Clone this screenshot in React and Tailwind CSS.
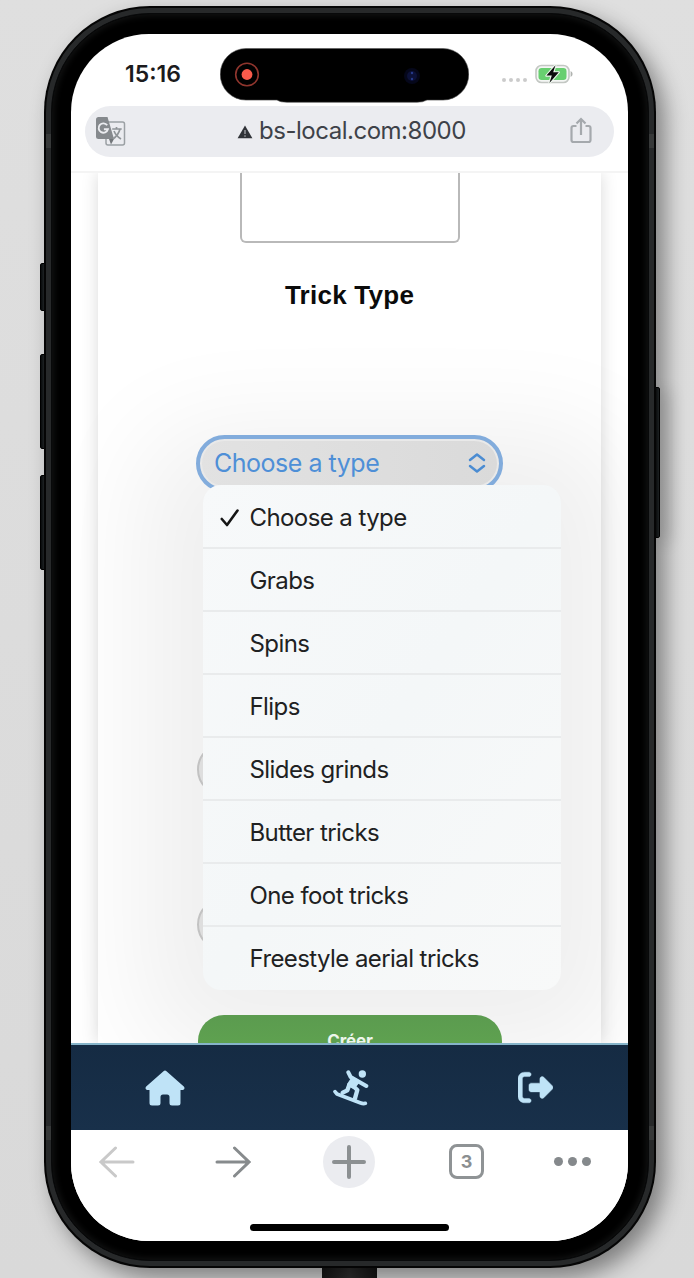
import { FaRightFromBracket } from "react-icons/fa6";

const OPTIONS = [
  "Choose a type",
  "Grabs",
  "Spins",
  "Flips",
  "Slides grinds",
  "Butter tricks",
  "One foot tricks",
  "Freestyle aerial tricks",
];

function StatusBar() {
  return (
    <div className="relative h-[72px] shrink-0">
      <div className="flex h-full items-center pt-[8px]">
        <div className="ml-[54px] w-[60px] text-[23px] leading-[28px] font-semibold whitespace-nowrap text-[#1b1b1d]">15:16</div>
        <div className="mr-[55px] ml-auto flex items-center">
          <div className="mt-[11px] mr-[8px] flex gap-[3px]">
            <i className="size-1 rounded-full bg-[#cbcbcb]" />
            <i className="size-1 rounded-full bg-[#cbcbcb]" />
            <i className="size-1 rounded-full bg-[#cbcbcb]" />
            <i className="size-1 rounded-full bg-[#cbcbcb]" />
          </div>
          <svg width="38" height="20" viewBox="0 0 38 20">
            <rect x="1" y="1.5" width="33" height="17" rx="5.5" fill="#f4f6f4" stroke="#c3c7c3" strokeWidth="1.6" />
            <rect x="3.5" y="4" width="28" height="12" rx="3.2" fill="#68cf70" />
            <path d="M35.6 7v6q2-1 2-3t-2-3z" fill="#b0b3b0" />
            <path d="M20.5 1.2 11.4 11.6h5.4l-2.4 7.3 9.4-10.6h-5.6z" fill="#0b0b0b" stroke="#eef6ee" strokeWidth="2.2" paintOrder="stroke" strokeLinejoin="round" />
          </svg>
        </div>
      </div>
      <div className="absolute top-[14px] left-[149px] h-[53px] w-[249px]">
        <svg width="249" height="55" viewBox="0 0 249 55">
          <path d="M26 .5H223a25.8 25.8 0 0 1 0 51.6H207q-4 2.2-10 2.2H67q-7 0-10-2.2H26A25.8 25.8 0 0 1 26 .5z" fill="#000" stroke="#555" strokeWidth=".6" />
          <circle cx="27" cy="26.500" r="11.300" fill="none" stroke="#8f352d" strokeWidth="1.600" />
          <circle cx="27" cy="26.500" r="5.400" fill="#fa5b4b" />
          <circle cx="192" cy="28" r="8" fill="#05071a" />
          <circle cx="192" cy="28" r="5" fill="#0c1138" />
          <circle cx="192" cy="25" r="1.200" fill="#263a8a" />
          <circle cx="192" cy="31" r="1.200" fill="#263a8a" />
        </svg>
      </div>
    </div>
  );
}

function AddressBar() {
  return (
    <div className="ml-[14px] flex h-[51px] w-[529px] shrink-0 items-center rounded-full bg-[#ebecf0]">
      <svg width="30" height="30" viewBox="0 0 30 30" className="ml-[11px]">
        <rect x="10" y="5" width="18.500" height="23" rx="2" fill="#ebecf0" stroke="#9ba0a4" strokeWidth="1.500" />
        <path d="M2.500 0H11.500L18 22H2.500Q0 22 0 19.500V2.500Q0 0 2.500 0z" fill="#85898d" />
        <path d="M13 22h5l-3 5.500z" fill="#73777b" />
        <path d="M11.200 8.300A4.700 4.700 0 1 0 11.900 12.300H7.900" fill="none" stroke="#ebecf0" strokeWidth="1.900" />
        <path d="M16.200 12h9.500M20.500 10v2M24 12q-1.500 6-7 10M18 14q2 5 7 8" fill="none" stroke="#8f9498" strokeWidth="1.700" />
      </svg>
      <svg width="16" height="14" viewBox="0 0 16 14" className="ml-[111px]">
        <path d="M8 .5 15.400 13.300H.6z" fill="#303338" />
        <path d="M8 5v4M8 10.300v1.500" stroke="#c8cbcf" strokeWidth="1" />
      </svg>
      <div className="mb-[1px] ml-[6px] w-[212px] text-[24px] leading-[30px] tracking-[-0.48px] whitespace-nowrap text-[#3e4249]">bs-local.com:8000</div>
      <svg width="22" height="27" viewBox="0 0 22 27" className="mr-[22px] mb-[3px] ml-auto" fill="none" stroke="#a5a9ad" strokeWidth="2.200">
        <path d="M6.500 9H3.500Q1.500 9 1.500 11V23Q1.500 25 3.500 25H18.500Q20.500 25 20.500 23V11Q20.500 9 18.500 9H15.500M11 18V2M6.500 6.500 11 2l4.500 4.500" />
      </svg>
    </div>
  );
}

function OptionMenu() {
  return (
    <div className="absolute top-[312px] left-[132px] h-[505px] w-[358px] overflow-hidden rounded-[18px] bg-linear-to-br from-[#f7f9fa] via-[#f4f7f8] to-[#f8f9f9] pt-[1px]">
      {OPTIONS.map((label, i) => (
        <div key={label} className="flex h-[63px] items-center border-b-2 border-[#e9ebec] pt-[2px] last:border-transparent">
          <div className="ml-[17px] w-[29.500px]">
            {i === 0 && (
              <svg width="20" height="20" viewBox="0 0 20 20" fill="none" stroke="#151515" strokeWidth="2.600" strokeLinecap="round" strokeLinejoin="round">
                <path d="M1.800 11 7 17 17.500 2.500" />
              </svg>
            )}
          </div>
          <span className="text-[24px] leading-[30px] tracking-[-0.58px] whitespace-nowrap text-[#202122]">{label}</span>
        </div>
      ))}
    </div>
  );
}

function Page() {
  return (
    <div className="relative h-[872px] shrink-0 overflow-hidden border-t-2 border-[#f4f4f4] bg-white">
      <div className="ml-[27px] h-full w-[503px] bg-white shadow-[0_0_16px_rgba(0,0,0,0.15)]">
        <div className="flex h-full flex-col items-center">
          <div className="h-[70px] w-[220px] shrink-0 rounded-b-[6px] border-2 border-t-0 border-[#b9b9b9]" />
          <div className="mt-[36px] text-[26px] leading-[32px] font-bold tracking-[0.25px] whitespace-nowrap text-[#0b0b0b] font-['Liberation_Sans',sans-serif]">Trick Type</div>
        </div>
      </div>
      <div className="absolute top-[312px] left-[132px] h-[505px] w-[358px] rounded-[18px] bg-[#f0f0f0] shadow-[0_6px_110px_60px_rgba(0,0,0,0.065)]" />
      <div className="absolute top-[262px] left-[125px] flex h-[57px] w-[307px] items-center rounded-full border-4 border-[#82acdc] bg-linear-to-r from-[#e2e2e2] to-[#dadada] shadow-[inset_0_0_0_2px_#e9e9e9]">
        <div className="mb-[1px] ml-[14px] text-[25px] leading-[30px] tracking-[-0.48px] whitespace-nowrap text-[#4e8fd7]">Choose a type</div>
        <svg width="20" height="22" viewBox="0 0 20 22" className="mr-[12px] mb-[2px] ml-auto" fill="none" stroke="#4b8cd2" strokeWidth="2.500" strokeLinecap="round" strokeLinejoin="round">
          <path d="m3 8 7-5.500L17 8M3 14l7 5.500 7-5.500" />
        </svg>
      </div>
      <div className="absolute top-[570px] left-[126px] h-[53px] w-[304px] rounded-full border-2 border-[#c2c2c2] bg-[#dedede]" />
      <div className="absolute top-[725px] left-[126px] h-[53px] w-[304px] rounded-full border-2 border-[#c2c2c2] bg-[#dedede]" />
      <div className="absolute top-[842px] left-[127px] flex h-[52px] w-[304px] justify-center rounded-full bg-linear-to-b from-[#5b9b4f] to-[#61a650] pt-[15px]">
        <span className="text-[17px] leading-[22px] font-bold tracking-[-0.2px] text-[#edf5eb]">Créer</span>
      </div>
      <OptionMenu />
    </div>
  );
}

function AppNav() {
  return (
    <div className="flex h-[87px] shrink-0 items-center border-t-2 border-[#86b4c9] bg-linear-to-b from-[#152b43] to-[#18304a] text-[#bfe3f7]">
      <svg width="40" height="36" viewBox="0 0 40 36" fill="currentColor" className="ml-[74px]">
        <path d="M18.500 1.200Q20 0 21.500 1.200L38.800 16.500Q40.500 18.700 38 20H35.500V33Q35.500 35.500 33 35.500H27Q24.500 35.500 24.500 33V27Q24.500 24.500 22 24.500H18Q15.500 24.500 15.500 27V33Q15.500 35.500 13 35.500H7Q4.500 35.500 4.500 33V20H2Q-.5 18.700 1.200 16.500z" />
      </svg>
      <svg width="36" height="36" viewBox="101 59 108 108" className="ml-[148px]" fill="none" stroke="currentColor" strokeLinecap="round" strokeLinejoin="round">
        <circle cx="189" cy="71" r="11" fill="currentColor" stroke="none" />
        <path d="M147 66 154 80 201 107" strokeWidth="12" />
        <path d="M160 84 176 94 163 111 148 103z" fill="currentColor" strokeWidth="10" />
        <path d="M150 103 144 120 130 127M158 104 174 119 167 144" strokeWidth="13" />
        <path d="M107 124 113 131 182 157Q192 161 198 159" strokeWidth="11" />
      </svg>
      <FaRightFromBracket className="ml-[149px] size-[35px]" stroke="currentColor" strokeWidth="6" />
    </div>
  );
}

function BrowserToolbar() {
  return (
    <div className="relative flex h-[111px] shrink-0 flex-col bg-white">
      <div className="mt-[5px] flex h-[53px] items-center">
        <svg width="36" height="32" viewBox="0 0 36 32" className="ml-[28px]" fill="none" stroke="#c9c9c9" strokeWidth="3" strokeLinecap="round">
          <path d="M34 16H2M16.500 2 2 16l14.500 14" />
        </svg>
        <svg width="36" height="32" viewBox="0 0 36 32" className="ml-[80px]" fill="none" stroke="#878b8d" strokeWidth="3" strokeLinecap="round">
          <path d="M2 16H34M19.500 2 34 16 19.500 30" />
        </svg>
        <div className="ml-[72px] flex size-[52px] items-center justify-center rounded-full bg-[#ebecf0]">
          <svg width="36" height="36" viewBox="0 0 36 36" stroke="#8c9092" strokeWidth="4" strokeLinecap="round">
            <path d="M18 3V33M3 18H33" />
          </svg>
        </div>
        <div className="ml-[74px] flex size-[35px] items-center justify-center rounded-[8px] border-[3px] border-[#8f9395] text-[18px] leading-none font-bold text-[#8b8f91]">3</div>
        <div className="ml-[70px] flex gap-[5px]">
          <i className="size-[9px] rounded-full bg-[#85898c]" />
          <i className="size-[9px] rounded-full bg-[#85898c]" />
          <i className="size-[9px] rounded-full bg-[#85898c]" />
        </div>
      </div>
      <div className="mt-[36px] ml-[179px] h-[7px] w-[199px] rounded-full bg-black" />
    </div>
  );
}

const SIDE_BUTTON =
  "absolute w-[6px] rounded-[2px] border border-black bg-linear-to-r from-[#090b0c] to-[#2b3032]";

export default function App() {
  return (
    <div className="relative h-[1278px] w-[694px] overflow-hidden bg-linear-to-b from-[#dfdfdf] to-[#d9d9d9] font-[Inter,sans-serif]">
      <div className={`${SIDE_BUTTON} top-[263px] left-[40px] h-[48px]`} />
      <div className={`${SIDE_BUTTON} top-[354px] left-[40px] h-[95px]`} />
      <div className={`${SIDE_BUTTON} top-[475px] left-[40px] h-[95px]`} />
      <div className={`${SIDE_BUTTON} top-[387px] left-[654px] h-[151px] shadow-[8px_4px_16px_rgba(0,0,0,0.25)]`} />
      <div className="absolute top-[1262px] left-[322px] h-4 w-[55px] bg-linear-to-r from-[#171717] via-[#303030] to-[#151515]" />
      <div className="relative mt-[6px] ml-[44px] h-[1262px] w-[612px] rounded-[106px] bg-[#050505] p-[2px] shadow-[9px_10px_22px_rgba(0,0,0,0.42)]">
        <div className="h-full rounded-[104px] bg-[#27292a] p-[5px]">
          <div className="h-full rounded-[99px] border border-[#08090a] bg-black pt-[20px] pl-[19px] shadow-[inset_0_0_6px_2px_#121313]">
            <div className="flex h-[1207px] w-[557px] flex-col overflow-hidden rounded-[78px] bg-white">
              <StatusBar />
              <AddressBar />
              <div className="h-[14px] shrink-0" />
              <Page />
              <AppNav />
              <BrowserToolbar />
            </div>
          </div>
        </div>
      </div>
      <div className="absolute top-[134px] left-[46px] h-[14px] w-[5px] bg-[#434545]/60" />
      <div className="absolute top-[134px] left-[649px] h-[14px] w-[5px] bg-[#434545]/60" />
      <div className="absolute top-[1126px] left-[46px] h-[14px] w-[5px] bg-[#434545]/60" />
      <div className="absolute top-[1126px] left-[649px] h-[14px] w-[5px] bg-[#434545]/60" />
    </div>
  );
}
